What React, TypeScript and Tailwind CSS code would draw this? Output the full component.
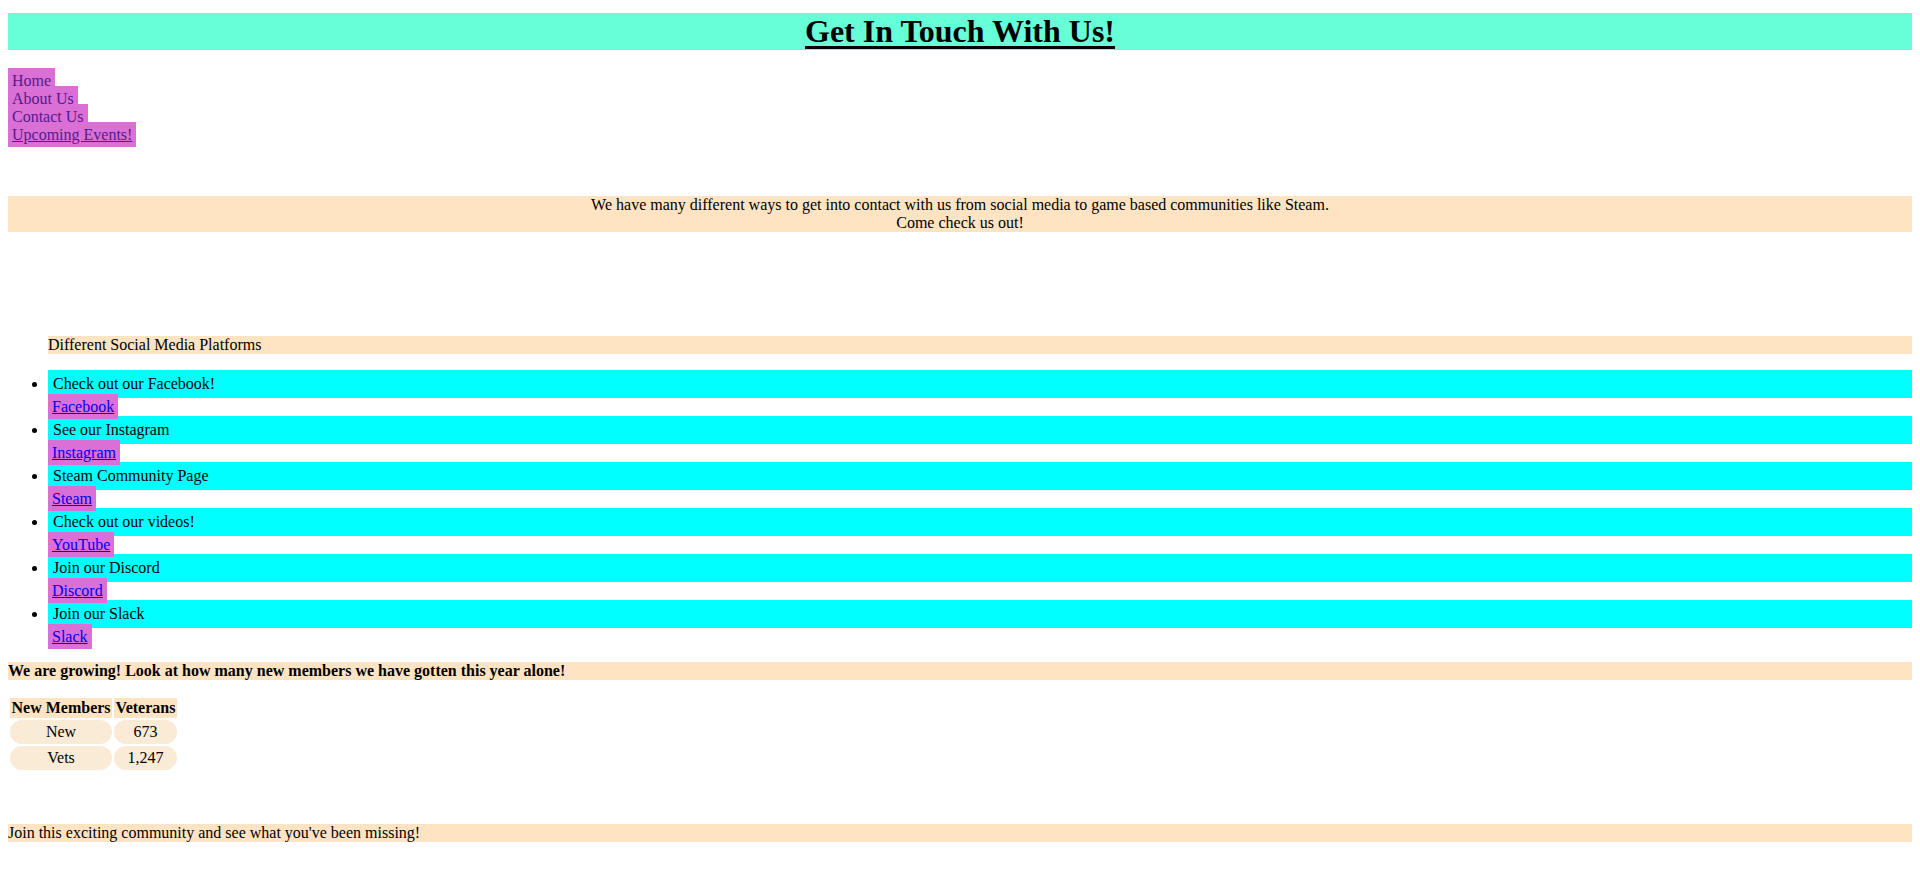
import React from 'react';

const navLinks = [
  { label: 'Home', underline: false },
  { label: 'About Us', underline: false },
  { label: 'Contact Us', underline: false },
  { label: 'Upcoming Events!', underline: true },
];

const socials = [
  { blurb: 'Check out our Facebook!', link: 'Facebook' },
  { blurb: 'See our Instagram', link: 'Instagram' },
  { blurb: 'Steam Community Page', link: 'Steam' },
  { blurb: 'Check out our videos!', link: 'YouTube' },
  { blurb: 'Join our Discord', link: 'Discord' },
  { blurb: 'Join our Slack', link: 'Slack' },
];

const members = [
  { kind: 'New', count: '673' },
  { kind: 'Vets', count: '1,247' },
];

export default function App(): JSX.Element {
  return (
    <div
      className="min-h-[869px] bg-white px-2 pt-[13px] text-[16px] leading-[18px] text-black"
      style={{ fontFamily: '"Liberation Serif", "Times New Roman", serif' }}
    >
      <h1 className="m-0 bg-[#66ffd8] text-center text-[32px] leading-[37px] font-bold">
        <span className="underline decoration-[3px] underline-offset-[4px]">Get In Touch With Us!</span>
      </h1>

      {/* Top nav */}
      <nav className="mt-[22px]">
        {navLinks.map((item) => (
          <div key={item.label}>
            <a
              href="#"
              className={`bg-[#da70d6] p-1 text-[#551a8b] ${item.underline ? 'underline' : 'no-underline'}`}
            >
              {item.label}
            </a>
          </div>
        ))}
      </nav>

      <p className="mt-[52px] bg-[#ffe4c4] text-center">
        We have many different ways to get into contact with us from social media to game based communities like Steam.
        <br />
        Come check us out!
      </p>

      <ul className="mt-[104px] list-disc pl-10">
        <li className="mb-4 list-none bg-[#ffe4c4]">Different Social Media Platforms</li>
        {socials.map((s) => (
          <li key={s.link}>
            <div className="bg-[#00ffff] p-[5px]">{s.blurb}</div>
            <div>
              <a href="#" className="bg-[#da70d6] p-1 text-[#0000ee] underline">
                {s.link}
              </a>
            </div>
          </li>
        ))}
      </ul>

      <p className="mt-4 bg-[#ffe4c4] font-bold">
        We are growing! Look at how many new members we have gotten this year alone!
      </p>

      <table className="mt-4 border-separate border-spacing-[2px]">
        <thead>
          <tr>
            <th className="bg-[#ffe4c4] px-[1.5px] py-px font-bold">New Members</th>
            <th className="bg-[#ffe4c4] px-[1.5px] py-px font-bold">Veterans</th>
          </tr>
        </thead>
        <tbody>
          {members.map((m) => (
            <tr key={m.kind}>
              <td className="rounded-[12px] bg-[#faebd7] px-px py-[3px] text-center">{m.kind}</td>
              <td className="rounded-[12px] bg-[#faebd7] px-px py-[3px] text-center">{m.count}</td>
            </tr>
          ))}
        </tbody>
      </table>

      <p className="mt-[52px] bg-[#ffe4c4]">Join this exciting community and see what you've been missing!</p>
    </div>
  );
}
